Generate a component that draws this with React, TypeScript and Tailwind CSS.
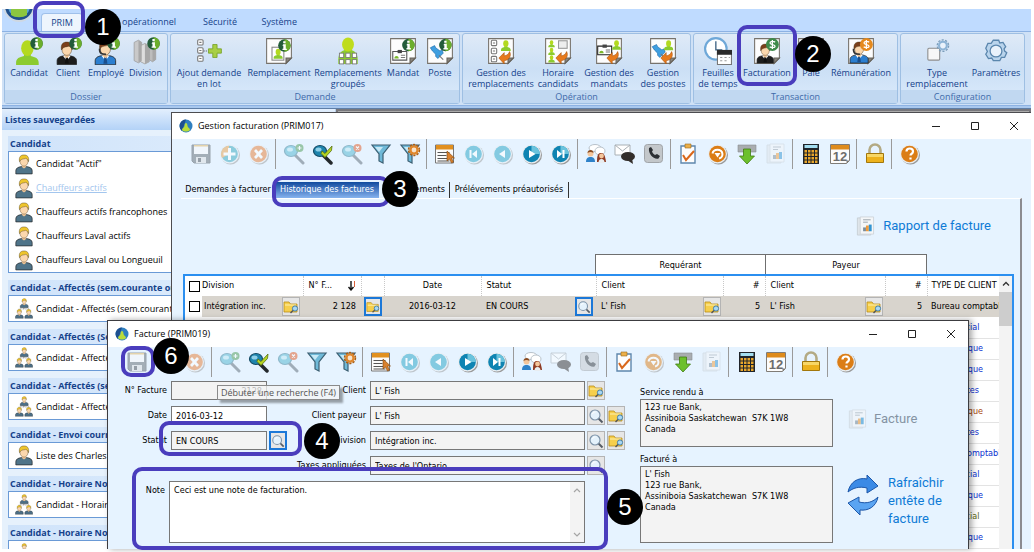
import type { ReactNode } from "react";
import clsx from "clsx";

/* ---------- icônes du ruban ---------- */

function InfoBadge({ x = 14, y = 0 }: { x?: number; y?: number }) {
  return (
    <g transform={`translate(${x} ${y})`}>
      <circle cx="6" cy="6" r="5.8" fill="#235c3a" />
      <path d="M6 .2a5.8 5.8 0 0 1 0 11.6z" fill="#6cae2c" />
      <path d="M4.800 4.800h2.500v4h1v1.200H4.200v-1.200h.8v-2.600h-.8zM4.900 1.900h2.200v2H4.900z" fill="#fff" />
    </g>
  );
}

function DollarBadge({ color }: { color: string }) {
  return (
    <g>
      <circle cx="18" cy="7" r="6" fill={color} />
      <path d="M20.500 4.800c-1-1-4.700-1.100-4.700.7 0 2 4.700 1 4.700 3 0 1.800-3.800 1.700-5 .6M18 2.800v8.400" fill="none" stroke="#fff" strokeWidth="1.200" />
    </g>
  );
}

function Page({ children }: { children?: ReactNode }) {
  return (
    <g>
      <path d="M1.500 1.500h23v18l-5 5h-18z" fill="#fdfdfd" stroke="#77736c" />
      <path d="M24.500 19.500h-5v5z" fill="#8a867e" stroke="#66625b" />
      {children}
    </g>
  );
}

function GreenMan({ x = 0, y = 0, s = 1 }: { x?: number; y?: number; s?: number }) {
  return (
    <g transform={`translate(${x} ${y}) scale(${s})`}>
      <path d="M0 20c0-4 3-5 7-6V11h6v3c4 1 7 2 7 6v2H0z" fill="#8ccb2f" />
      <ellipse cx="10" cy="7" rx="5.500" ry="7" fill="#b3d91f" />
    </g>
  );
}

function Bust({ hair, coat, x = 0, y = 0, s = 1, tie }: { hair: string; coat: string; x?: number; y?: number; s?: number; tie?: string }) {
  return (
    <g transform={`translate(${x} ${y}) scale(${s})`}>
      <path d="M1 24v-4c0-3 3-4.500 7-5h6c4 .5 7 2 7 5v4z" fill={coat} stroke="#222" strokeWidth=".8" />
      {tie && <path d="M7 15l4 5 4-5z" fill="#fff" />}
      {tie && <path d="M10 16h2l1 7h-4z" fill={tie} />}
      <path d="M8.500 12h5v3.500l-2.500 2-2.500-2z" fill="#f0c596" />
      <ellipse cx="11" cy="8.500" rx="5" ry="6" fill="#fbd7ad" stroke="#6b5a44" strokeWidth=".6" />
      <path d="M5.500 9C4.500 3 7 .8 11 .8S17.500 3 16.500 9c-.7-2.500-2-3.500-3.500-4-2 1-5.500 0-7.500 4z" fill={hair} stroke="#4b3a1e" strokeWidth=".5" />
    </g>
  );
}

function OrangeReturn() {
  return <path d="M11 19.500l5-5v3c2.500-.3 4-1.500 5-4 2 4-.5 8-5 8.500v3z" fill="#e77a1c" stroke="#a34f0a" strokeWidth=".5" />;
}

function Pin({ x = 0, y = 0 }: { x?: number; y?: number }) {
  return (
    <g transform={`translate(${x} ${y})`}>
      <path d="M1 3l4-2 1 2 4 3 2-1 1 3-5 5-2-2 0-2-3-3z" fill="#3f9fe0" stroke="#1e6cab" strokeWidth=".6" />
      <path d="M9 10l4 4" stroke="#777" strokeWidth="1" />
    </g>
  );
}

function Clipboard({ x = 0, y = 0, dark }: { x?: number; y?: number; dark?: boolean }) {
  return (
    <g transform={`translate(${x} ${y})`}>
      <path d="M.5 2.500h13v8H.5z" fill="#fff" stroke={dark ? "#222" : "#555"} />
      <path d="M5 1h4v3H5z" fill="#444" />
      <path d="M8 6h4M8 8h4" stroke="#777" />
      <path d="M2 9c0-3 4-3 4 0z" fill="#7ab82a" />
    </g>
  );
}

function Squares({ x = 0, y = 0 }: { x?: number; y?: number }) {
  return (
    <g transform={`translate(${x} ${y})`} fill="#fff" stroke="#777">
      <rect x=".5" y=".5" width="5" height="5" rx="1" />
      <rect x=".5" y="8" width="5" height="5" rx="1" />
      <rect x=".5" y="15.500" width="5" height="5" rx="1" />
      <path d="M2 3h2M2 10.500h2M2 18h2" />
    </g>
  );
}

const ribbonIcons: Record<string, ReactNode> = {
  candidat: (<g><GreenMan x={1} y={3} s={1.05} /><InfoBadge /></g>),
  client: (<g><Bust hair="#7b3f1a" coat="#1d1d1d" y={4} x={2} s={0.9} tie="#111" /><InfoBadge /></g>),
  employe: (
    <g>
      <Bust hair="#7b3f1a" coat="#2c7fd0" y={3} x={2} s={0.95} tie="#1b4f8c" />
      <path d="M7 11c0 5 2 5 6 5" fill="none" stroke="#333" strokeWidth="1.500" />
      <InfoBadge />
    </g>
  ),
  division: (
    <g>
      <path d="M2 5l4-2 3 2v17l-3 2-4-2z" fill="#c9c9c9" stroke="#9b9b9b" strokeWidth=".7" />
      <path d="M8 8l4-2 4 2v15l-4 2-4-2z" fill="#dedede" stroke="#9b9b9b" strokeWidth=".7" />
      <path d="M16 12l3-2 3 2v9l-3 2-3-2z" fill="#bdbdbd" stroke="#9b9b9b" strokeWidth=".7" />
      <path d="M6 3v21l3-2V5zM12 6v19l4-2V8zM19 10v13l3-2v-9z" fill="#a8a8a8" />
      <InfoBadge />
    </g>
  ),
  ajout: (
    <g>
      <Squares x={2} y={2} />
      <path d="M16.500 7h4v4h4v4h-4v4h-4v-4h-4v-4h4z" fill="#a8cf45" stroke="#6f9b1c" strokeWidth=".7" />
      <path d="M8 13h4" stroke="#555" strokeDasharray="1 1" />
    </g>
  ),
  remplacement: (
    <Page>
      <rect x="6.500" y="9.500" width="11" height="12" fill="#fff" stroke="#888" />
      <GreenMan x={8} y={11} s={0.42} />
      <InfoBadge x={12} y={2} />
    </Page>
  ),
  groupes: (
    <g>
      <path d="M4 21c0-6 3-8 6-9h6c3 1 6 3 6 9v4H4z" fill="#8ccb2f" />
      <ellipse cx="13" cy="7" rx="5.500" ry="6.500" fill="#bfdc1c" />
      <g fill="#fff" stroke="#777" strokeWidth=".8">
        <rect x="5" y="15" width="4" height="4" />
        <rect x="11" y="15" width="4" height="4" />
        <rect x="17" y="15" width="4" height="4" />
        <rect x="5" y="21" width="4" height="4" />
        <rect x="11" y="21" width="4" height="4" />
        <rect x="17" y="21" width="4" height="4" />
      </g>
    </g>
  ),
  mandat: (<Page><Clipboard x={3} y={11} /><InfoBadge x={12} y={1.500} /></Page>),
  poste: (<Page><Pin x={3} y={7} /><InfoBadge x={12} y={1.500} /></Page>),
  gestRempl: (<Page><Squares x={3.500} y={2.500} /><GreenMan x={13} y={3} s={0.45} /><OrangeReturn /></Page>),
  horaire: (
    <Page>
      <GreenMan x={4} y={3} s={0.3} />
      <GreenMan x={4} y={10} s={0.3} />
      <GreenMan x={4} y={17} s={0.3} />
      <rect x="13.500" y="3.500" width="8" height="7" fill="#eee" stroke="#999" />
      <OrangeReturn />
    </Page>
  ),
  gestMandats: (<Page><Clipboard x={2} y={6} dark /><GreenMan x={16} y={3} s={0.4} /><OrangeReturn /></Page>),
  gestPostes: (<Page><Pin x={2} y={6} /><GreenMan x={14} y={3} s={0.42} /><OrangeReturn /></Page>),
  feuilles: (
    <g>
      <circle cx="11" cy="11" r="10" fill="#fff" stroke="#6fa8d8" strokeWidth="2" />
      <path d="M11 4v8h6" fill="none" stroke="#3a5f80" strokeWidth="1.200" />
      <path d="M12.500 14.500h13v11h-13z" fill="#fff" stroke="#777" />
      <path d="M12 12h14v4.500H12z" fill="#2b2b2b" />
      <path d="M15 19h2m2 0h2m2 0h1m-9 3h2m2 0h2" stroke="#999" />
    </g>
  ),
  facturation: (<Page><Bust hair="#7b3f1a" coat="#1d1d1d" x={3} y={6} s={0.76} tie="#111" /><DollarBadge color="#3f8a4a" /></Page>),
  paie: (<Page><Bust hair="#7b3f1a" coat="#2c7fd0" x={3} y={6} s={0.76} /></Page>),
  remuneration: (
    <Page>
      <Bust hair="#7b3f1a" coat="#2c7fd0" x={2} y={4} s={0.84} tie="#1b4f8c" />
      <path d="M6 11c0 5 2 5 6 5" fill="none" stroke="#333" strokeWidth="1.500" />
      <DollarBadge color="#e58a1e" />
    </Page>
  ),
  type: (
    <g>
      <rect x="4.500" y="10.500" width="11" height="11" rx="1" fill="#f7f7f7" stroke="#8d8d8d" />
      <circle cx="18.500" cy="8" r="3.600" fill="#e9f2fb" stroke="#8db4d6" strokeWidth="2" />
      <circle cx="18.500" cy="8" r="5.300" fill="none" stroke="#7b9dba" strokeWidth="1.200" strokeDasharray="2 1.300" />
    </g>
  ),
  parametres: (
    <g>
      <path d="M10.500 3h5l1 2.500 3-.5 2.500 4-1.500 2 .5 2 2 1.500-2 4.500-3 0-1.500 3h-6l-1.500-2.500-3 .5-2.500-4 1.500-2.500-1.500-3 2-4.500 3 0z" fill="#b9d4ec" stroke="#5a86ad" strokeWidth="1.200" />
      <circle cx="13" cy="13" r="5.500" fill="#e9f2fb" stroke="#5a86ad" strokeWidth="1.200" />
    </g>
  ),
};

/* ---------- icônes des barres d'outils ---------- */

function Lens({ children }: { children?: ReactNode }) {
  return (
    <g>
      <path d="M12 12l8 8" stroke="#5d6a75" strokeWidth="3" strokeLinecap="round" />
      <ellipse cx="8" cy="8" rx="6.500" ry="5.500" fill="#4fb5cf" stroke="#3b7f98" strokeWidth="1.200" />
      <ellipse cx="7" cy="6.500" rx="3" ry="2" fill="#b9e6f2" />
      {children}
    </g>
  );
}

function Disc({ fill, children }: { fill: string; children: ReactNode }) {
  return (
    <g>
      <circle cx="11.500" cy="12" r="9.500" fill="#9a9a9a" />
      <circle cx="10.500" cy="11" r="9.500" fill="#e9eef2" />
      <circle cx="10.500" cy="11" r="8.300" fill={fill} />
      {children}
    </g>
  );
}

function Funnel() {
  return (
    <g>
      <path d="M2 2h18l-7 9v9l-4-2v-7z" fill="#6fb9d8" stroke="#3c5f72" strokeWidth="1.200" />
      <path d="M5 4h8l-4 5z" fill="#c8e9f6" />
    </g>
  );
}

function ReportGlyph() {
  return (
    <g>
      <path d="M2 2h14v18H2z" fill="#dfe5ea" stroke="#c3cad0" strokeWidth=".8" />
      <path d="M5 1h14v18H5z" fill="#f4f6f8" stroke="#c9cfd4" strokeWidth=".8" />
      <path d="M8 4h8M8 6.500h5" stroke="#9aa3ab" />
      <path d="M8 12h3v4H8z" fill="#7c8d9a" />
      <path d="M11 10h3v6h-3z" fill="#ee9a3a" />
      <path d="M14 9h3v7h-3z" fill="#3395d2" />
    </g>
  );
}

function FolderGlyph() {
  return (
    <svg viewBox="0 0 16 16" className="size-4" aria-hidden="true">
      <path d="M1 3h5l1.500 2H14v8H1z" fill="#f6cf4c" stroke="#b98d1a" strokeWidth=".8" />
      <path d="M2 6h11" stroke="#fdf0b0" />
      <path d="M10.500 11l-3 3" stroke="#555" strokeWidth="1.500" />
      <circle cx="12" cy="9.500" r="2.600" fill="#a9d8f2" stroke="#3975a5" strokeWidth=".9" />
    </svg>
  );
}

function LoupeGlyph() {
  return (
    <svg viewBox="0 0 16 16" className="size-4" aria-hidden="true">
      <path d="M10 10l4.500 4.500" stroke="#555d66" strokeWidth="2" />
      <circle cx="7" cy="7" r="5" fill="#e4f2fc" stroke="#7d93a8" strokeWidth="1.200" />
      <path d="M4.500 6c.5-1.500 1.500-2 3-2" fill="none" stroke="#fff" />
    </svg>
  );
}

const toolIcons: Record<string, ReactNode> = {
  enregistrer: (
    <g>
      <path d="M2 2h18v18H4l-2-2z" fill="#636b72" stroke="#4f565c" />
      <path d="M4 2h14v9H4z" fill="#fafafa" />
      <path d="M4 2h14v1.500H4z" fill="#e2b45a" />
      <path d="M6 14h10v6H6z" fill="#dcdcdc" />
      <path d="M8 15h3v4H8z" fill="#464c52" />
    </g>
  ),
  ajouter: (<Disc fill="#35a6bd"><path d="M3 15A8.300 8.300 0 0 1 10 2.700V11z" fill="#e8a14a" /><path d="M9 5h3v4.500h4.500v3H12V17H9v-4.500H4.500v-3H9z" fill="#fff" /></Disc>),
  annuler: (<Disc fill="#e67d33"><path d="M6 8l2-2 2.500 2.800L13 6l2 2-2.700 3L15 14l-2 2-2.500-2.700L8 16l-2-2 2.700-3z" fill="#fff" /></Disc>),
  rechPlus: (<Lens><circle cx="16.500" cy="5" r="4" fill="#4c9a54" /><path d="M14.500 5h4M16.500 3v4" stroke="#fff" strokeWidth="1.200" /></Lens>),
  rechOk: (
    <g>
      <path d="M11 12l8 8" stroke="#23282c" strokeWidth="3.500" strokeLinecap="round" />
      <ellipse cx="8" cy="8" rx="6.500" ry="5.500" fill="#1e84ad" stroke="#164c66" strokeWidth="1.200" />
      <ellipse cx="6.500" cy="6.500" rx="3" ry="2" fill="#8fd0e8" />
      <path d="M10 8l3 2.500 7-7.500-.5 4.500-6.500 7-4-4z" fill="#b5d422" stroke="#587012" strokeWidth=".8" />
    </g>
  ),
  rechX: (<Lens><circle cx="16.500" cy="5" r="4" fill="#e2571f" /><path d="M15 3.500l3 3m0-3l-3 3" stroke="#fff" strokeWidth="1.200" /></Lens>),
  filtre: <Funnel />,
  filtreOpt: (
    <g>
      <Funnel />
      <circle cx="15" cy="7" r="5.400" fill="none" stroke="#a85d14" strokeWidth="1.600" strokeDasharray="2.200 1.200" />
      <circle cx="15" cy="7" r="3.600" fill="#f6e3cc" stroke="#e0872c" strokeWidth="2.400" />
    </g>
  ),
  liste: (
    <g>
      <path d="M1.500 2h18v18h-18z" fill="#fbfbfb" stroke="#777" />
      <path d="M2 2h17v4.500H2z" fill="#e1901f" />
      <path d="M3.500 9.500h12M3.500 12.500h9M3.500 15.500h12M3.500 18h12" stroke="#555" />
      <path d="M13 8v10l2.500-2 2 4 2-1-2-4h3z" fill="#d9812e" stroke="#80460e" strokeWidth=".6" />
    </g>
  ),
  premier: (<Disc fill="#22a3c4"><path d="M6.500 7h2v8h-2zM14 7v8l-5-4z" fill="#fff" /></Disc>),
  precedent: (<Disc fill="#22a3c4"><path d="M13 7v8l-6-4z" fill="#fff" /></Disc>),
  suivant: (<Disc fill="#0f84b2"><path d="M10.500 2.700A8.300 8.300 0 0 1 18.800 11H10.500z" fill="#6ac3dd" /><path d="M8 7v8l6.500-4z" fill="#fff" /></Disc>),
  dernier: (<Disc fill="#0f84b2"><path d="M10.500 2.700A8.300 8.300 0 0 1 18.800 11H10.500z" fill="#6ac3dd" /><path d="M7 7v8l5-4zM12.500 7h2v8h-2z" fill="#fff" /></Disc>),
  contacts: (
    <g>
      <ellipse cx="10" cy="5" rx="6" ry="3.500" fill="#fff" stroke="#aab4bc" strokeWidth=".8" />
      <ellipse cx="15" cy="8" rx="5" ry="4" fill="#fff" stroke="#aab4bc" strokeWidth=".8" />
      <path d="M1 19c0-4 2-5 4.500-5s4.500 1 4.500 5z" fill="#2f82c9" />
      <circle cx="5.500" cy="10.500" r="3" fill="#f4c69c" />
      <path d="M2.500 10c0-4 6-4 6 0-2-1.500-4-1.500-6 0z" fill="#8a4c22" />
      <path d="M12 19c0-7 1-9 4-9s4 2 5 9z" fill="#8e3a22" />
      <path d="M13.500 20c0-3 1-4 3-4s3 1 3 4z" fill="#e9edf0" />
      <circle cx="16.500" cy="13" r="2.400" fill="#f4c69c" />
    </g>
  ),
  courriel: (
    <g>
      <path d="M1 2h15v10H1z" fill="#fff" stroke="#a9b0b5" />
      <path d="M1 2l7.500 6L16 2" fill="none" stroke="#a9b0b5" />
      <ellipse cx="14" cy="13.500" rx="7" ry="4.500" fill="#332e2b" />
      <path d="M13 17l6 4-1-6z" fill="#332e2b" />
    </g>
  ),
  telephone: (
    <g>
      <rect x="1.500" y="1.500" width="18" height="18" rx="3" fill="#c3c7ca" stroke="#a0a4a8" />
      <path d="M6 5l2-1 2 3-1 1.500c.5 1.500 1.500 2.500 3 3.500l2-1 3 2-1.500 2.500C11 17 5 11 6 5z" fill="#2c3034" />
    </g>
  ),
  tache: (
    <g>
      <path d="M3 3h14v17H3z" fill="#fdfdfd" stroke="#5e87ad" strokeWidth="1.400" />
      <path d="M7 1h6v4H7z" fill="#ecb04a" stroke="#9c6a1a" strokeWidth=".6" />
      <path d="M5 12l3 5 8-9" fill="none" stroke="#d9671b" strokeWidth="2" />
    </g>
  ),
  retour: (
    <Disc fill="#db7d16">
      <path d="M5.500 10.500a5 4.500 0 1 1 6.500 5" fill="none" stroke="#fff" strokeWidth="2" />
      <path d="M7.500 10h6l-3 4.500z" fill="#fff" />
    </Disc>
  ),
  exporter: (
    <g>
      <path d="M2 2h18v7H2z" fill="#a9adb0" stroke="#8a8e91" strokeWidth=".6" />
      <path d="M7.500 6h7v7h4L11 21l-7.500-8h4z" fill="#6cc02c" stroke="#417b12" strokeWidth=".8" />
    </g>
  ),
  rapport: <ReportGlyph />,
  calcul: (
    <g>
      <path d="M3 1h16v20H3z" fill="#20242a" />
      <path d="M4.500 2h13v3h-13z" fill="#a3ddf0" />
      <g fill="#e8a62c">
        <path d="M4.500 7h2.500v2.500H4.500zM8 7h2.500v2.500H8zM11.500 7H14v2.500h-2.500zM15 7h2.500v2.500H15z" />
        <path d="M4.500 10.500h2.500V13H4.500zM8 10.500h2.500V13H8zM11.500 10.500H14V13h-2.500zM15 10.500h2.500V13H15z" />
        <path d="M4.500 14h2.500v2.500H4.500zM8 14h2.500v2.500H8zM11.500 14H14v2.500h-2.500zM15 14h2.500v2.500H15z" />
        <path d="M4.500 17.500h2.500V20H4.500zM8 17.500h2.500V20H8zM11.500 17.500H14V20h-2.500zM15 17.500h2.500V20H15z" />
      </g>
    </g>
  ),
  calendrier: (
    <g>
      <path d="M1.500 1.500h19v16l-3 3h-16z" fill="#fcfcfc" stroke="#807c77" />
      <path d="M2 2h18v4.500H2z" fill="#de8b1c" />
      <path d="M20.500 17.500h-3v3z" fill="#807c77" />
      <text x="11" y="17.500" fontSize="13" fontWeight="700" textAnchor="middle" fill="#6d6d6d" fontFamily="Liberation Sans, sans-serif">12</text>
    </g>
  ),
  verrou: (
    <g>
      <path d="M5.500 11V7a5.500 5.500 0 0 1 11 0v4" fill="none" stroke="#b3aa84" strokeWidth="2.600" />
      <path d="M2.500 10.500h17v9h-17z" fill="#edb21d" stroke="#a2770b" />
      <path d="M3 11h16v3H3z" fill="#f8d766" />
    </g>
  ),
  aide: (<Disc fill="#db7d16"><path d="M7.500 8.500c0-4 6.500-4 6.500 0 0 2.500-2.500 2-2.500 4M11.500 14.500v2" fill="none" stroke="#fff" strokeWidth="2.200" /></Disc>),
};

type Tool = { id: string; label: string };

const TOOL_GROUPS: Tool[][] = [
  [
    { id: "enregistrer", label: "Enregistrer" },
    { id: "ajouter", label: "Ajouter" },
    { id: "annuler", label: "Annuler" },
  ],
  [
    { id: "rechPlus", label: "Débuter une recherche" },
    { id: "rechOk", label: "Exécuter la recherche" },
    { id: "rechX", label: "Annuler la recherche" },
    { id: "filtre", label: "Filtre" },
    { id: "filtreOpt", label: "Options du filtre" },
  ],
  [
    { id: "liste", label: "Liste" },
    { id: "premier", label: "Premier" },
    { id: "precedent", label: "Précédent" },
    { id: "suivant", label: "Suivant" },
    { id: "dernier", label: "Dernier" },
  ],
  [
    { id: "contacts", label: "Contacts" },
    { id: "courriel", label: "Courriel" },
    { id: "telephone", label: "Téléphone" },
  ],
  [
    { id: "tache", label: "Tâches" },
    { id: "retour", label: "Retour" },
    { id: "exporter", label: "Exporter" },
    { id: "rapport", label: "Rapport" },
  ],
  [
    { id: "calcul", label: "Calculatrice" },
    { id: "calendrier", label: "Calendrier" },
  ],
  [{ id: "verrou", label: "Verrouiller" }],
  [{ id: "aide", label: "Aide" }],
];

function Toolbar({ disabled }: { disabled: string[] }) {
  return (
    <div role="toolbar" className="flex h-[30px] items-stretch">
      {TOOL_GROUPS.map((group, i) => (
        <div key={i} className="flex">
          {i > 0 && <span className="mr-[3px] ml-[2px] w-px bg-[#9a9a9a]" />}
          {group.map((tool) => (
            <button key={tool.id} type="button" aria-label={tool.label} className="flex w-[29px] items-center justify-center">
              <svg viewBox="0 0 22 22" className={clsx("size-[22px]", disabled.includes(tool.id) && "opacity-50")} aria-hidden="true">
                {toolIcons[tool.id]}
              </svg>
            </button>
          ))}
        </div>
      ))}
    </div>
  );
}

/* ---------- ruban ---------- */

const RIBBON = [
  {
    title: "Dossier",
    items: [
      { icon: "candidat", lines: ["Candidat"], width: "w-[40px]" },
      { icon: "client", lines: ["Client"], width: "w-[32px]" },
      { icon: "employe", lines: ["Employé"], width: "w-[38px]" },
      { icon: "division", lines: ["Division"], width: "w-[35px]" },
    ],
  },
  {
    title: "Demande",
    items: [
      { icon: "ajout", lines: ["Ajout demande", "en lot"], width: "w-[68px]" },
      { icon: "remplacement", lines: ["Remplacement"], width: "w-[66px]" },
      { icon: "groupes", lines: ["Remplacements", "groupés"], width: "w-[66px]" },
      { icon: "mandat", lines: ["Mandat"], width: "w-[38px]" },
      { icon: "poste", lines: ["Poste"], width: "w-[30px]" },
    ],
  },
  {
    title: "Opération",
    items: [
      { icon: "gestRempl", lines: ["Gestion des", "remplacements"], width: "w-[68px]" },
      { icon: "horaire", lines: ["Horaire", "candidats"], width: "w-[40px]" },
      { icon: "gestMandats", lines: ["Gestion des", "mandats"], width: "w-[56px]" },
      { icon: "gestPostes", lines: ["Gestion", "des postes"], width: "w-[46px]" },
    ],
  },
  {
    title: "Transaction",
    items: [
      { icon: "feuilles", lines: ["Feuilles", "de temps"], width: "w-[40px]" },
      { icon: "facturation", lines: ["Facturation"], width: "w-[52px]" },
      { icon: "paie", lines: ["Paie"], width: "w-[30px]" },
      { icon: "remuneration", lines: ["Rémunération"], width: "w-[64px]" },
    ],
  },
  {
    title: "Configuration",
    items: [
      { icon: "type", lines: ["Type", "remplacement"], width: "w-[64px]" },
      { icon: "parametres", lines: ["Paramètres"], width: "w-[48px]" },
    ],
  },
];

function Ribbon() {
  return (
    <header className="text-[#15428b]">
      <div className="flex h-[22px] items-end bg-[#bfdbff]">
        <div className="h-full w-[39px] overflow-hidden">
          <svg viewBox="0 0 39 22" className="h-[22px] w-[39px]" aria-hidden="true">
            <circle cx="17" cy="-3" r="15" fill="#20508c" stroke="#cfd8e2" strokeWidth="2" />
            <circle cx="17" cy="-3" r="11" fill="#5aa7d6" />
            <path d="M9 0h16v6c-4 3-12 3-16 0z" fill="#8cc63f" />
          </svg>
        </div>
        <nav className="flex h-[18px] items-center">
          <a href="#prim" className="flex h-full w-[42px] items-center justify-center rounded-t-sm border border-b-0 border-[#9fc0ea] bg-[#eef5fd]">PRIM</a>
          <a href="#suivi" className="w-[93px] text-right whitespace-nowrap">Suivi opérationnel</a>
          <a href="#securite" className="w-[61px] text-right">Sécurité</a>
          <a href="#systeme" className="w-[60px] text-right">Système</a>
        </nav>
      </div>
      <div className="flex h-[75px] gap-[2px] border-y border-[#8db2e3] bg-[#cfe1f6] px-[2px] pt-px pb-px">
        {RIBBON.map((group) => (
          <section key={group.title} className="flex shrink-0 flex-col rounded-[3px] border border-[#9ebfe3] bg-linear-to-b from-[#dfeaf7] via-[#cbdff5] to-[#dbebfc]">
            <div className="flex flex-1 gap-[3px] px-[4px] pt-[3px]">
              {group.items.map((item) => (
                <button key={item.icon} type="button" className={clsx("flex flex-col items-center", item.width)}>
                  <svg viewBox="0 0 26 26" className="mb-[2px] size-[28px] shrink-0" aria-hidden="true">
                    {ribbonIcons[item.icon]}
                  </svg>
                  {item.lines.map((line) => (
                    <span key={line} className="leading-[11px] whitespace-nowrap">{line}</span>
                  ))}
                </button>
              ))}
            </div>
            <h2 className="h-[13px] bg-[#c1d8f1] text-center leading-[13px] text-[#3e6aaa]">{group.title}</h2>
          </section>
        ))}
      </div>
      <div className="h-[3px] border-b border-[#5f7ea6] bg-[#a9c8ee]" />
    </header>
  );
}

/* ---------- volet des listes ---------- */

const LISTS = [
  {
    title: "Candidat",
    items: ['Candidat "Actif"', "Chauffeurs actifs", "Chauffeurs actifs francophones", "Chauffeurs Laval actifs", "Chauffeurs Laval ou Longueuil"],
    team: false,
  },
  { title: "Candidat - Affectés (sem.courante ou suivante)", items: ["Candidat - Affectés (sem.courante)"], team: true },
  { title: "Candidat - Affectés (Semaine courante)", items: ["Candidat - Affectés (Semaine)"], team: true },
  { title: "Candidat - Affectés (semaine suivante)", items: ["Candidat - Affectés (suivante)"], team: true },
  { title: "Candidat - Envoi courriel", items: ["Liste des Charles"], team: false },
  { title: "Candidat - Horaire Non confirmé", items: ["Candidat - Horaire Non confirmé"], team: true },
  { title: "Candidat - Horaire Non reçu", items: ["Candidat - Horaire Non reçu"], team: true },
];

function ListIcon({ team }: { team: boolean }) {
  return (
    <svg viewBox="0 0 22 25" className="h-[21px] w-[18px] shrink-0" aria-hidden="true">
      {team ? (
        <g>
          <path d="M11 8v6M5 16v-3h12v3" fill="none" stroke="#777" strokeDasharray="1 1" />
          <Bust hair="#eec52c" coat="#4c6f86" x={6} y={0} s={0.48} />
          <Bust hair="#eec52c" coat="#4c6f86" x={0} y={13} s={0.48} />
          <Bust hair="#eec52c" coat="#4c6f86" x={11.500} y={13} s={0.48} />
        </g>
      ) : (
        <Bust hair="#eec52c" coat="#4f7489" />
      )}
    </svg>
  );
}

function Sidebar() {
  return (
    <aside className="w-[333px] shrink-0 overflow-hidden bg-[#e6f1fc]">
      <h2 className="flex h-[21px] items-center bg-linear-to-b from-[#e3effd] to-[#b3d2f7] pl-[3px] font-bold text-[#15428b]">Listes sauvegardées</h2>
      <div className="flex flex-col gap-[7px] pt-[6px] pl-[6px]">
        {LISTS.map((list) => (
          <section key={list.title}>
            <h3 className="h-[15px] bg-linear-to-r from-[#cfe3fa] to-[#e4f0fd] pl-[2px] leading-[16px] font-bold whitespace-nowrap text-[#15428b]">{list.title}</h3>
            <ul className="border border-[#6a9ad6] bg-white">
              {list.items.map((item) => (
                <li key={item} className={clsx("flex items-center gap-[3px] pl-[6px] whitespace-nowrap", list.items.length > 1 ? "h-[24px]" : "h-[25px]")}>
                  <ListIcon team={list.team} />
                  <a href="#liste" className={item === "Chauffeurs actifs" ? "text-[#a3c6ee] underline" : "text-black"}>{item}</a>
                </li>
              ))}
            </ul>
          </section>
        ))}
      </div>
    </aside>
  );
}

/* ---------- fenêtres ---------- */

function TitleBar({ title }: { title: string }) {
  return (
    <div className="flex h-[26px] items-center bg-white pr-[7px] pl-[7px] text-black">
      <svg viewBox="0 0 14 14" className="mr-[5px] size-[14px]" aria-hidden="true">
        <circle cx="7" cy="7" r="6.500" fill="#2f7fc0" />
        <path d="M7 .5a6.500 6.500 0 0 0-4 11.500z" fill="#1d4f8f" />
        <path d="M3 11c0-2 2-2 2.500-4 0-4 3-4 3 0 .5 2 2.500 2 2.500 4-2 2-6 2-8 0z" fill="#b9dc3a" />
      </svg>
      <h2 className="flex-1">{title}</h2>
      <div className="flex gap-[19px]">
        <button type="button" aria-label="Réduire" className="flex size-5 items-center justify-center">
          <svg viewBox="0 0 10 10" className="size-[10px]"><path d="M1 5.500h8" stroke="#222" /></svg>
        </button>
        <button type="button" aria-label="Agrandir" className="flex size-5 items-center justify-center">
          <svg viewBox="0 0 10 10" className="size-[10px]"><path d="M1.500 1.500h7v7h-7z" fill="none" stroke="#222" /></svg>
        </button>
        <button type="button" aria-label="Fermer" className="flex size-5 items-center justify-center">
          <svg viewBox="0 0 10 10" className="size-[10px]"><path d="M1 1l8 8M9 1L1 9" stroke="#222" /></svg>
        </button>
      </div>
    </div>
  );
}

function LookupButton({ kind, active, label }: { kind: "folder" | "loupe"; active?: boolean; label: string }) {
  return (
    <button
      type="button"
      aria-label={label}
      className={clsx("flex h-[19px] w-[18px] shrink-0 items-center justify-center bg-[#e6e6e6]", active ? "border-2 border-[#1b78d8]" : "border border-[#b4b4b4]")}
    >
      {kind === "folder" ? <FolderGlyph /> : <LoupeGlyph />}
    </button>
  );
}

const OTHER_TYPES = [
  { name: "Commercial", color: "text-[#0a2fd0]" },
  { name: "Informatique", color: "text-[#0a2fd0]" },
  { name: "Informatique", color: "text-[#0a2fd0]" },
  { name: "Spécialistes", color: "text-[#0a2fd0]" },
  { name: "Informatique", color: "text-[#a8480c]" },
  { name: "Spécialistes", color: "text-[#0a2fd0]" },
  { name: "Bureau comptable", color: "text-[#0a2fd0]" },
  { name: "Commercial", color: "text-[#0a2fd0]" },
  { name: "Informatique", color: "text-[#0a2fd0]" },
  { name: "Commercial", color: "text-[#5c6a14]" },
  { name: "Informatique", color: "text-[#0a2fd0]" },
];

function InvoiceTable() {
  const th = "border-r border-dotted border-[#c8c8c8] px-[5px] font-normal";
  return (
    <table className="w-full table-fixed border-collapse bg-white text-left text-black">
      <colgroup>
        <col className="w-[17px]" />
        <col className="w-[80px]" />
        <col className="w-[21px]" />
        <col className="w-[58px]" />
        <col className="w-[23px]" />
        <col className="w-[97px]" />
        <col className="w-[94px]" />
        <col className="w-[21px]" />
        <col className="w-[107px]" />
        <col className="w-[20px]" />
        <col className="w-[42px]" />
        <col className="w-[100px]" />
        <col className="w-[20px]" />
        <col className="w-[42px]" />
        <col />
      </colgroup>
      <thead>
        <tr className="h-[20px]">
          <th className="pl-[4px]">
            <input type="checkbox" aria-label="Tout sélectionner" className="block size-[11px] appearance-none border border-black bg-white" />
          </th>
          <th colSpan={2} className="border-r border-dotted border-[#c8c8c8] font-normal">Division</th>
          <th className={th}>
            <span className="flex items-center justify-between">
              N° F...
              <svg viewBox="0 0 8 10" className="h-[10px] w-[8px]" aria-hidden="true">
                <path d="M3 0v8M.5 6L3 9l2.500-3" fill="none" stroke="#111" strokeWidth="1.400" />
                <path d="M6.500 0v6" stroke="#d9603a" />
              </svg>
            </span>
          </th>
          <th className={th} />
          <th className="border-r border-dotted border-[#c8c8c8] text-center font-normal">Date</th>
          <th colSpan={2} className={th}>Statut</th>
          <th colSpan={2} className={th}>Client</th>
          <th className="border-r border-dotted border-[#c8c8c8] pr-[5px] text-right font-normal">#</th>
          <th colSpan={2} className={th}>Client</th>
          <th className="border-r border-dotted border-[#c8c8c8] pr-[5px] text-right font-normal">#</th>
          <th className="overflow-hidden pl-[4px] font-normal whitespace-nowrap">TYPE DE CLIENT</th>
        </tr>
      </thead>
      <tbody>
        <tr className="h-[21px] bg-[#d8d4cd]">
          <td className="bg-white pl-[4px]">
            <input type="checkbox" aria-label="Sélectionner la facture 2128" className="block size-[11px] appearance-none border border-black bg-white" />
          </td>
          <td className="pl-[2px]">Intégration inc.</td>
          <td><LookupButton kind="folder" label="Ouvrir la division" /></td>
          <td className="pr-[5px] text-right">2 128</td>
          <td><div className="flex justify-center"><LookupButton kind="folder" active label="Ouvrir la facture" /></div></td>
          <td className="text-center">2016-03-12</td>
          <td className="pl-[5px]">EN COURS</td>
          <td><LookupButton kind="loupe" active label="Choisir le statut" /></td>
          <td className="pl-[5px]">L' Fish</td>
          <td><LookupButton kind="folder" label="Ouvrir le requérant" /></td>
          <td className="pr-[5px] text-right">5</td>
          <td className="pl-[5px]">L' Fish</td>
          <td><LookupButton kind="folder" label="Ouvrir le payeur" /></td>
          <td className="pr-[5px] text-right">5</td>
          <td className="overflow-hidden pl-[4px] whitespace-nowrap">Bureau comptable</td>
        </tr>
        {OTHER_TYPES.map((type, i) => (
          <tr key={i} className="h-[21px] border-b border-[#e3e3e3]">
            <td colSpan={14} />
            <td className={clsx("overflow-hidden pl-[4px] whitespace-nowrap", type.color)}>{type.name}</td>
          </tr>
        ))}
      </tbody>
    </table>
  );
}

function BillingWindow() {
  return (
    <section className="absolute top-[112px] right-[3px] bottom-[3px] left-[171px] flex flex-col overflow-hidden border-t border-l border-[#4c4c50] bg-[#e6f3ff]">
      <TitleBar title="Gestion facturation (PRIM017)" />
      <div className="pl-[14px]">
        <Toolbar disabled={["enregistrer", "ajouter", "annuler", "rechPlus", "rechX", "premier", "precedent", "rapport"]} />
      </div>
      <div className="flex flex-1 flex-col overflow-hidden pt-[13px] pr-[9px] pl-[9px] font-['DejaVu_Sans_Condensed','DejaVu_Sans',sans-serif] text-[9px] text-black">
        <div role="tablist" className="flex h-[16px] items-stretch whitespace-nowrap">
          <button type="button" role="tab" className="w-[94px] text-center">Demandes à facturer</button>
          <button type="button" role="tab" aria-selected="true" className="w-[104px] bg-linear-to-b from-[#0e4a9e] to-[#86b3ee] text-center text-white">Historique des factures</button>
          <button type="button" role="tab" className="w-[71px] border-r border-[#333] pr-[4px] text-right">Encaissements</button>
          <button type="button" role="tab" className="w-[119px] border-r border-[#333] text-center">Prélévements préautorisés</button>
        </div>
        <div className="flex flex-1 flex-col border-t border-r-2 border-t-white border-r-[#8b8b90] pr-[6px] pl-[2px]">
          <a href="#rapport" className="mt-[14px] mr-[23px] flex h-[26px] items-center gap-[8px] self-end font-[Roboto,sans-serif] text-[13px] text-[#0f7bd6]">
            <svg viewBox="0 0 20 21" className="size-[20px]" aria-hidden="true"><ReportGlyph /></svg>
            Rapport de facture
          </a>
          <div className="mt-[15px] flex pl-[412px] text-center">
            <div className="flex h-[20px] w-[171px] items-center justify-center border border-b-0 border-[#6f6f6f] bg-white pt-[2px]">Requérant</div>
            <div className="flex h-[20px] w-[161px] items-center justify-center border border-b-0 border-l-0 border-[#6f6f6f] bg-white pt-[2px]">Payeur</div>
          </div>
          <div className="flex flex-1 overflow-hidden border-2 border-b-0 border-[#2b8ff0] bg-white">
            <div className="min-w-0 flex-1"><InvoiceTable /></div>
            <div className="flex w-[13px] flex-col items-center bg-[#f3f3f3]">
              <svg viewBox="0 0 13 16" className="h-[16px] w-[13px]" aria-hidden="true"><path d="M4 9.500L7 6.500l3 3" fill="none" stroke="#333" strokeWidth="1.300" /></svg>
              <span className="h-[34px] w-full bg-[#cdcdcd]" />
            </div>
          </div>
        </div>
      </div>
    </section>
  );
}

const fieldBase = "h-[19px] min-w-0 flex-1 border border-[#777] px-[4px] text-black outline-none";

function Field({ id, label, value, labelWidth, white, right, children }: { id: string; label: string; value: string; labelWidth: string; white?: boolean; right?: boolean; children?: ReactNode }) {
  return (
    <div className="flex items-center">
      <label htmlFor={id} className={clsx("shrink-0 pr-[4px] text-right whitespace-nowrap", labelWidth)}>{label}</label>
      <input id={id} defaultValue={value} className={clsx(fieldBase, white ? "bg-white" : "bg-[#f3f3f3]", right && "text-right text-[#777]")} />
      {children}
    </div>
  );
}

function InvoiceWindow() {
  return (
    <section className="absolute top-[320px] right-[65px] bottom-[3px] left-[107px] flex flex-col overflow-hidden border border-b-0 border-[#3c3c40] bg-[#e6f3ff] shadow-[3px_0_6px_rgba(0,0,0,0.35)]">
      <TitleBar title="Facture (PRIM019)" />
      <div className="pl-[14px]">
        <Toolbar disabled={["enregistrer", "ajouter", "annuler", "rechPlus", "rechX", "premier", "precedent", "courriel", "telephone", "retour", "rapport"]} />
      </div>
      <form className="flex pt-[4px] font-['DejaVu_Sans_Condensed','DejaVu_Sans',sans-serif] text-[9px] text-black">
        <div className="w-[517px] shrink-0">
          <div className="flex">
            <div className="flex w-[179px] flex-col gap-[6px]">
              <Field id="numero" label="N° Facture" value="2128" labelWidth="w-[63px]" right>
                <span className="w-[20px]" />
              </Field>
              <Field id="date" label="Date" value="2016-03-12" labelWidth="w-[63px]" white>
                <span className="w-[20px]" />
              </Field>
              <Field id="statut" label="Statut" value="EN COURS" labelWidth="w-[63px]">
                <span className="pl-[2px]"><LookupButton kind="loupe" active label="Choisir le statut" /></span>
              </Field>
            </div>
            <div className="flex flex-1 flex-col gap-[6px]">
              <Field id="client" label="Client" value="L' Fish" labelWidth="w-[83px]">
                <div className="flex w-[40px] gap-[2px] pl-[2px]"><LookupButton kind="folder" label="Ouvrir le client" /></div>
              </Field>
              <Field id="payeur" label="Client payeur" value="L' Fish" labelWidth="w-[83px]">
                <div className="flex w-[40px] gap-[2px] pl-[2px]"><LookupButton kind="loupe" label="Choisir le payeur" /><LookupButton kind="folder" label="Ouvrir le payeur" /></div>
              </Field>
              <Field id="division" label="Division" value="Intégration inc." labelWidth="w-[83px]">
                <div className="flex w-[40px] gap-[2px] pl-[2px]"><LookupButton kind="loupe" label="Choisir la division" /><LookupButton kind="folder" label="Ouvrir la division" /></div>
              </Field>
              <Field id="taxes" label="Taxes appliquées" value="Taxes de l'Ontario" labelWidth="w-[83px]">
                <div className="flex w-[40px] gap-[2px] pl-[2px]"><LookupButton kind="loupe" label="Choisir les taxes" /></div>
              </Field>
            </div>
          </div>
          <div className="mt-[6px] flex pr-[40px]">
            <label htmlFor="note" className="w-[61px] pt-[3px] pr-[4px] text-right">Note</label>
            <div className="flex h-[62px] flex-1 border border-[#777] bg-white">
              <textarea id="note" defaultValue="Ceci est une note de facturation." className="flex-1 resize-none overflow-hidden px-[4px] pt-[2px] outline-none" />
              <svg viewBox="0 0 14 60" className="h-[60px] w-[14px] bg-[#f3f3f3]" aria-hidden="true">
                <path d="M4 10l3-3 3 3M4 51l3 3 3-3" fill="none" stroke="#a5a5a5" strokeWidth="1.200" />
              </svg>
            </div>
          </div>
        </div>
        <div className="ml-[15px] flex w-[193px] shrink-0 flex-col pt-[5px]">
          <label htmlFor="service" className="h-[13px]">Service rendu à</label>
          <textarea id="service" defaultValue={"123 rue Bank,\nAssiniboia Saskatchewan  S7K 1W8\nCanada"} className="h-[48px] resize-none overflow-hidden border border-[#777] bg-[#f3f3f3] px-[4px] pt-[2px] leading-[11px] outline-none" />
          <label htmlFor="facture" className="mt-[6px] h-[13px]">Facturé à</label>
          <textarea id="facture" defaultValue={"L' Fish\n123 rue Bank,\nAssiniboia Saskatchewan  S7K 1W8\nCanada"} className="h-[77px] resize-none overflow-hidden border border-[#777] bg-[#f3f3f3] px-[4px] pt-[2px] leading-[11px] outline-none" />
        </div>
        <div className="flex flex-1 flex-col pt-[25px] pl-[14px] font-[Roboto,sans-serif] text-[13px] leading-[18px]">
          <a href="#facture" className="flex h-[26px] items-center gap-[7px] text-[#8593a3]">
            <svg viewBox="0 0 20 21" className="size-[20px] opacity-60" aria-hidden="true"><ReportGlyph /></svg>
            Facture
          </a>
          <a href="#rafraichir" className="mt-[42px] flex items-start gap-[9px] text-[#0f7bd6]">
            <svg viewBox="0 0 32 42" className="h-[42px] w-[32px] shrink-0" aria-hidden="true">
              <path d="M1 18C3 8 11 3 20 5V1l11 11-11 7v-5c-8-2-14 0-19 4z" fill="#3b8ae6" stroke="#1c56a8" />
              <path d="M31 23c-2 10-10 14-18 13v5L1 29l11-6v5c8 2 14 0 19-5z" fill="#5aa4f2" stroke="#1c56a8" />
            </svg>
            <span className="w-[60px]">Rafraîchir entête de facture</span>
          </a>
        </div>
      </form>
    </section>
  );
}

/* ---------- annotations ---------- */

const FRAMES = [
  "top-px left-[33px] h-[37px] w-[52px]",
  "top-[25px] left-[737px] h-[61px] w-[60px]",
  "top-[176px] left-[272px] h-[31px] w-[118px]",
  "top-[346px] left-[121px] h-[31px] w-[34px]",
  "top-[421px] left-[159px] h-[35px] w-[143px]",
  "top-[467px] left-[132px] h-[83px] w-[476px]",
];

const STEPS = [
  "top-[9px] left-[85px]",
  "top-[36px] left-[795px]",
  "top-[171px] left-[382px]",
  "top-[423px] left-[304px]",
  "top-[489px] left-[607px]",
  "top-[338px] left-[153px]",
];

export default function App() {
  return (
    <div className="relative flex h-screen flex-col overflow-hidden bg-white pt-[9px] pr-[3px] pb-[3px] pl-[2px] font-['Open_Sans','Noto_Sans',sans-serif] text-[9px]">
      <Ribbon />
      <main className="flex min-h-0 flex-1 bg-[#b8cfe8]">
        <Sidebar />
        <div className="ml-px flex-1 border-2 border-[#77777c] bg-[#ababab]" />
      </main>

      <BillingWindow />
      <InvoiceWindow />

      {/* infobulle */}
      <div role="tooltip" className="absolute top-[385px] left-[217px] border border-[#8a8a8a] bg-[#f4f4f4]/75 px-[3px] leading-[13px] whitespace-nowrap text-[#555] shadow-[3px_3px_2px_rgba(0,0,0,0.35)]">
        Débuter une recherche (F4)
      </div>

      {FRAMES.map((place) => (
        <div key={place} className={clsx("pointer-events-none absolute rounded-[10px] border-4 border-[#4a3dbd]", place)} />
      ))}
      {STEPS.map((place, i) => (
        <span key={place} className={clsx("absolute flex size-[36px] items-center justify-center rounded-full bg-black font-['Liberation_Sans',sans-serif] text-[24px] text-white", place)}>
          {i + 1}
        </span>
      ))}
    </div>
  );
}
